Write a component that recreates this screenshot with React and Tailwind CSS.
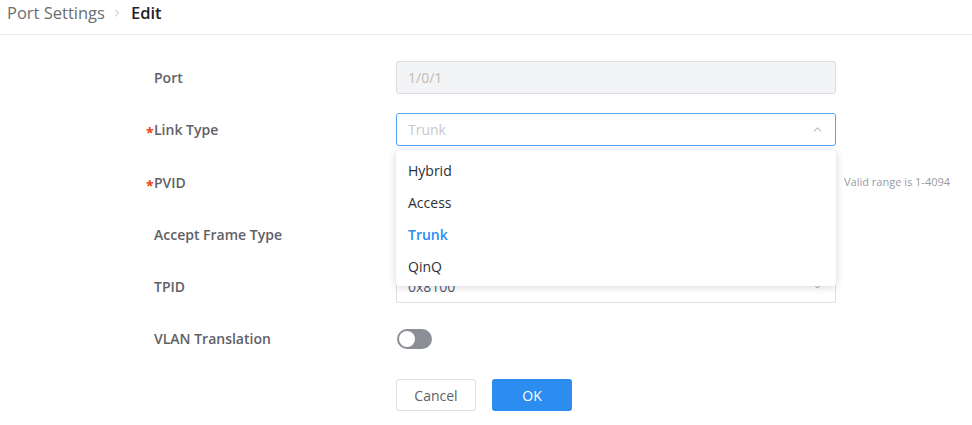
import { ChevronDown, ChevronRight, ChevronUp } from "lucide-react";

const font = { fontFamily: '"Open Sans", "Noto Sans", sans-serif' };

function Label({ children, required }) {
  return (
    <div className="relative flex h-full items-center text-[14px] font-semibold text-[#5f6166]">
      {required && <span className="absolute -left-[8px] top-[9px] text-[14px] font-bold text-[#ed4014]">*</span>}
      {children}
    </div>
  );
}

function Row({ label, required, children, help }) {
  return (
    <div className="flex h-[33px] items-center">
      <div className="h-full w-[242px]">
        <Label required={required}>{label}</Label>
      </div>
      <div className="relative h-full w-[440px]">{children}</div>
      {help && <div className="pl-[8px] text-[11px] text-[#999ba0]">{help}</div>}
    </div>
  );
}

function SelectBox({ value, open, muted }) {
  return (
    <div
      className={`flex h-full items-center justify-between rounded-[3px] border bg-white px-[11px] text-[14px] ${
        open ? "border-[#57a3f3]" : "border-[#dcdee2]"
      } ${muted ? "text-[#c5c8ce]" : "text-[#515a6e]"}`}
    >
      <span>{value}</span>
      {open ? (
        <ChevronUp size={13} className="text-[#808695]" strokeWidth={1.5} />
      ) : (
        <ChevronDown size={13} className="text-[#808695]" strokeWidth={1.5} />
      )}
    </div>
  );
}

const options = ["Hybrid", "Access", "Trunk", "QinQ"];

export default function App() {
  return (
    <div className="h-[425px] w-[972px] bg-white" style={font}>
      <div className="flex h-[35px] items-center border-b border-[#e8eaec] pl-[7px] pb-[8px] text-[16.5px]">
        <span className="text-[#6b6e73]">Port Settings</span>
        <ChevronRight size={12} className="ml-[6px] mr-[8px] text-[#9ea1a6]" strokeWidth={1.5} />
        <span className="font-semibold text-[#1f2329]">Edit</span>
      </div>

      <div className="flex flex-col gap-[19.3px] pl-[154px] pt-[26px]">
        <Row label="Port">
          <div className="flex h-full items-center rounded-[3px] border border-[#dcdee2] bg-[#f3f4f6] px-[11px] text-[14px] text-[#c2bbb0]">
            1/0/1
          </div>
        </Row>
        <Row label="Link Type" required>
          <SelectBox value="Trunk" open muted />
          <div className="absolute left-0 top-[37px] z-10 w-[440px] rounded-[3px] bg-white py-[4px] shadow-[0_1px_8px_rgba(0,0,0,0.16)]">
            {options.map((o) => (
              <div
                key={o}
                className={`flex h-[32px] items-center px-[12px] text-[14px] ${
                  o === "Trunk" ? "font-semibold text-[#2d8cf0]" : "text-[#2b2f36]"
                }`}
              >
                {o}
              </div>
            ))}
          </div>
        </Row>
        <Row label="PVID" required help="Valid range is 1-4094">
          <div className="h-full rounded-[3px] border border-[#dcdee2] bg-white" />
        </Row>
        <Row label="Accept Frame Type">
          <SelectBox value="" />
        </Row>
        <Row label="TPID">
          <SelectBox value="0x8100" />
        </Row>
        <Row label="VLAN Translation">
          <div className="flex h-full items-center">
            <div className="ml-[1px] flex h-[20px] w-[35px] items-center rounded-full bg-[#8b8e94] px-[2px]">
              <div className="h-[16px] w-[16px] rounded-full bg-white" />
            </div>
          </div>
        </Row>
      </div>

      <div className="flex gap-[16px] pl-[396px] pt-[24px]">
        <button className="h-[32px] w-[80px] rounded-[3px] border border-[#dcdee2] bg-white text-[14px] text-[#606266]">
          Cancel
        </button>
        <button className="h-[32px] w-[80px] rounded-[3px] bg-[#2d8cf0] text-[14px] text-white">OK</button>
      </div>
    </div>
  );
}
